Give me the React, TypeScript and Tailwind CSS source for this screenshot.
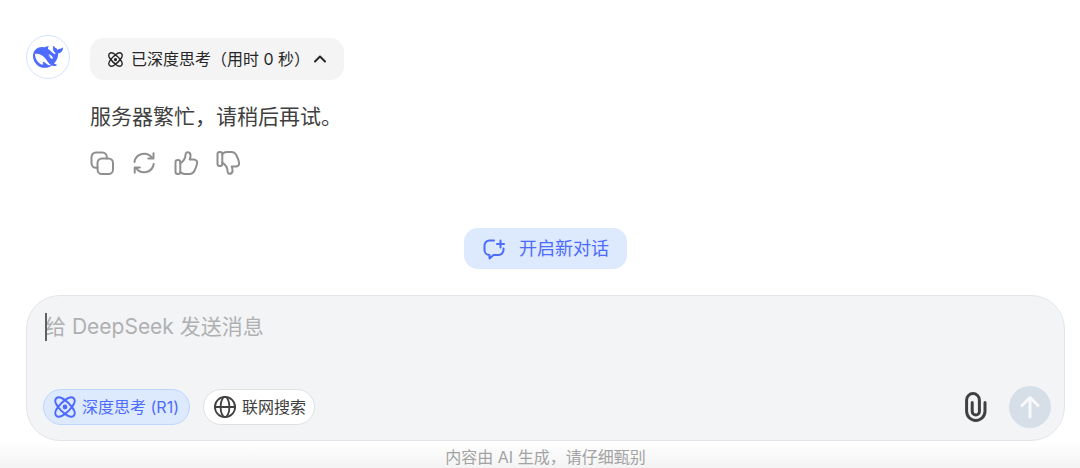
import React from 'react';

const WhaleLogo = () => (
  <svg viewBox="0 0 24 24" className="size-[30px] fill-[#4d6bfe]" aria-hidden="true">
    <path d="M23.748 4.482c-.254-.124-.364.113-.512.234-.051.039-.094.09-.137.136-.372.397-.806.657-1.373.626-.829-.046-1.537.214-2.163.848-.133-.782-.575-1.248-1.247-1.548-.352-.156-.708-.311-.955-.65-.172-.241-.219-.51-.305-.774-.055-.16-.11-.323-.293-.35-.2-.031-.278.136-.356.276-.313.572-.434 1.202-.422 1.84.027 1.436.633 2.58 1.838 3.393.137.093.172.187.129.323-.082.28-.18.552-.266.833-.055.179-.137.217-.329.14a5.526 5.526 0 01-1.736-1.18c-.857-.828-1.631-1.742-2.597-2.458a11.365 11.365 0 00-.689-.471c-.985-.957.13-1.743.388-1.836.27-.098.093-.432-.779-.428-.872.004-1.67.295-2.687.684a3.055 3.055 0 01-.465.137 9.597 9.597 0 00-2.883-.102c-1.885.21-3.39 1.102-4.497 2.623C.082 8.606-.231 10.684.152 12.85c.403 2.284 1.569 4.175 3.36 5.653 1.858 1.533 3.997 2.284 6.438 2.14 1.482-.085 3.133-.284 4.994-1.86.47.234.962.327 1.78.397.63.059 1.236-.03 1.705-.128.735-.156.684-.837.419-.961-2.155-1.004-1.682-.595-2.113-.926 1.096-1.296 2.746-2.642 3.392-7.003.05-.347.007-.565 0-.845-.004-.17.035-.237.23-.256a4.173 4.173 0 001.545-.475c1.396-.763 1.96-2.015 2.093-3.517.02-.23-.004-.467-.247-.588zM11.581 18c-2.089-1.642-3.102-2.183-3.52-2.16-.392.024-.321.471-.235.763.09.288.207.486.371.739.114.167.192.416-.113.603-.673.416-1.842-.14-1.897-.167-1.361-.802-2.5-1.86-3.301-3.307-.774-1.393-1.224-2.887-1.298-4.482-.02-.386.093-.522.477-.592a4.696 4.696 0 011.529-.039c2.132.312 3.946 1.265 5.468 2.774.868.86 1.525 1.887 2.202 2.891.72 1.066 1.494 2.082 2.48 2.914.348.292.625.514.891.677-.802.09-2.14.11-3.054-.614zm1-6.44a.306.306 0 01.415-.287.302.302 0 01.2.288.306.306 0 01-.31.307.303.303 0 01-.304-.308zm3.11 1.596c-.2.081-.399.151-.59.16a1.245 1.245 0 01-.798-.254c-.274-.23-.47-.358-.552-.758a1.73 1.73 0 01.016-.588c.07-.327-.008-.537-.239-.727-.187-.156-.426-.199-.688-.199a.559.559 0 01-.254-.078c-.11-.054-.2-.19-.114-.358.028-.054.16-.186.192-.21.356-.202.767-.136 1.146.016.352.144.618.408 1.001.782.391.451.462.576.685.914.176.265.336.537.445.848.067.195-.019.354-.25.452z" />
  </svg>
);

const Icon = ({ className, box = '0 0 24 24', width = 2, children }: {
  className: string;
  box?: string;
  width?: number;
  children: React.ReactNode;
}) => (
  <svg
    viewBox={box}
    className={className}
    fill="none"
    stroke="currentColor"
    strokeWidth={width}
    strokeLinecap="round"
    strokeLinejoin="round"
    aria-hidden="true"
  >
    {children}
  </svg>
);

const Atom = ({ className }: { className: string }) => (
  <Icon className={className} width={2.2}>
    <path d="M12 4.500C15.500 1.500 19.500.5 21.500 2.500s1 6-2 9.500M12 4.500C8.500 1.500 4.500.5 2.500 2.500s-1 6 2 9.500M12 19.500c3.500 3 7.500 4 9.500 2s1-6-2-9.500M12 19.500c-3.500 3-7.500 4-9.500 2s-1-6 2-9.500M12 4.500c2.900 2 5.500 4.600 7.500 7.500M19.500 12c-2 2.900-4.600 5.500-7.500 7.500M12 19.500C9.100 17.500 6.500 14.900 4.500 12M4.500 12C6.500 9.100 9.100 6.500 12 4.500" />
    <circle cx="12" cy="12" r="1.5" fill="currentColor" />
  </Icon>
);

const Thumb = () => (
  <>
    <rect x="1.5" y="9" width="4.8" height="14" rx="2.2" />
    <path d="M6.3 12.3c3.2-1.8 5-4.8 5.3-8.6.2-1.8 1-2.7 2.3-2.5 1.9.3 2.8 1.9 2.6 3.9-.1 1.3-.4 2.4-.8 3.4h4c2.5 0 3.8 1.7 3.3 4.1-.5 2.4-1.2 4.3-2.3 6.6-1.2 2.5-2.9 3.8-5.4 3.8H11c-2 0-3.5-.6-4.7-2" />
  </>
);

const actions = [
  {
    label: '复制',
    drawing: (
      <>
        <rect x="7.5" y="7.5" width="15.5" height="15.5" rx="4.5" />
        <path d="M7.5 16.8H6a4.5 4.5 0 0 1-4.5-4.5V6A4.5 4.5 0 0 1 6 1.5h6.3A4.5 4.5 0 0 1 16.8 6v1.5" />
      </>
    ),
  },
  {
    label: '重新生成',
    drawing: (
      <>
        <path d="M2.500 11a9.700 9.700 0 0 1 17.500-4.200M21.500 2.300v5.200h-5.200" />
        <path d="M21.700 13a9.700 9.700 0 0 1-17.500 4.200M2.700 21.700v-5.200h5.200" />
      </>
    ),
  },
  { label: '喜欢', drawing: <Thumb /> },
  { label: '不喜欢', drawing: <g transform="matrix(1 0 0 -1 0 24)"><Thumb /></g> },
];

const Message = () => (
  <div className="flex gap-5">
    <div className="flex size-11 shrink-0 items-center justify-center rounded-full border border-[#d5e4ff]">
      <WhaleLogo />
    </div>
    <div className="flex flex-col items-start pt-[3px]">
      <button className="flex h-[42px] items-center rounded-[14px] bg-[#f4f4f4] px-[18px] text-[#262626]">
        <Atom className="size-[15px]" />
        <span className="ml-2 text-base">已深度思考（用时 0 秒）</span>
        <Icon className="ml-1 size-3" width={4}>
          <path d="M2 17 12 7l10 10" />
        </Icon>
      </button>
      <p className="mt-[21px] text-[21px] leading-8 text-[#404040]">服务器繁忙，请稍后再试。</p>
      <div className="mt-[18px] flex gap-[18px] text-[#8f8f8f]">
        {actions.map((action) => (
          <button key={action.label} aria-label={action.label}>
            <Icon className="size-6">{action.drawing}</Icon>
          </button>
        ))}
      </div>
    </div>
  </div>
);

const Composer = () => (
  <div className="rounded-[34px] border border-[#e2e5ea] bg-[#f3f4f6] pt-[17px] pr-[13px] pb-3 pl-4">
    <div className="relative">
      <textarea
        aria-label="给 DeepSeek 发送消息"
        placeholder="给 DeepSeek 发送消息"
        className="block h-[73px] w-full resize-none px-[2px] text-[21px] leading-7 outline-none placeholder:text-[#afb0b2]"
      />
      {/* text cursor */}
      <span className="absolute top-0 left-[2px] h-7 w-[2px] bg-[#5f6062]" />
    </div>
    <div className="flex items-center">
      <button className="flex h-9 items-center gap-[6px] rounded-full border border-[#bfd6ff] bg-[#dde9fc] px-[10px] text-base text-[#4d6bfe]">
        <Atom className="size-[22px]" />
        深度思考 (R1)
      </button>
      <button className="ml-[13px] flex h-9 items-center gap-[6px] rounded-full border border-[#dfe0e2] bg-white pr-2 pl-[10px] text-base text-[#404040]">
        <Icon className="size-[22px]">
          <circle cx="12" cy="12" r="11" />
          <ellipse cx="12" cy="12" rx="4.8" ry="11" />
          <path d="M1 12h22" />
        </Icon>
        联网搜索
      </button>
      <button aria-label="上传附件" className="ml-auto text-[#404040]">
        <Icon className="h-[30px] w-[22px]" box="0 0 22 30" width={3}>
          <path d="M20 10.5v8.700a9.200 9.200 0 0 1-18.400 0V8a6.400 6.400 0 0 1 12.800 0v11.500a3.600 3.600 0 0 1-7.200 0V10.5" />
        </Icon>
      </button>
      <button aria-label="发送" className="ml-[22px] flex size-[42px] items-center justify-center rounded-full bg-[#d6dee8] text-[#f8f9fb]">
        <Icon className="size-6" width={3}>
          <path d="M12 22V2.5M4 10.5l8-8 8 8" />
        </Icon>
      </button>
    </div>
  </div>
);

const App = () => {
  return (
    <main className="flex min-h-screen flex-col bg-white pt-[35px] font-[Inter,'Noto_Sans_CJK_SC',sans-serif]">
      <div className="pr-[15px] pl-[26px]">
        <Message />
        <div className="mt-[53px] flex justify-center">
          <button className="flex h-[41px] items-center gap-[13px] rounded-[14px] bg-[#dde9fc] px-[18px] text-lg text-[#4d6bfe]">
            <Icon className="size-6">
              <path d="M12 3.5H7.5a5 5 0 0 0-5 5V13a5 5 0 0 0 5 5v3.5l4-3.500h5a5 5 0 0 0 5-5v-1.500" />
              <path d="M18.5 3.5v7M15 7h7" />
            </Icon>
            开启新对话
          </button>
        </div>
        <div className="mt-[26px]">
          <Composer />
        </div>
      </div>
      <p className="grow bg-linear-to-b from-white to-[#f3f3f3] pt-[6px] pr-[15px] pl-[26px] text-center text-base leading-5 text-[#a3a3a3]">
        内容由 AI 生成，请仔细甄别
      </p>
    </main>
  );
};

export default App;
